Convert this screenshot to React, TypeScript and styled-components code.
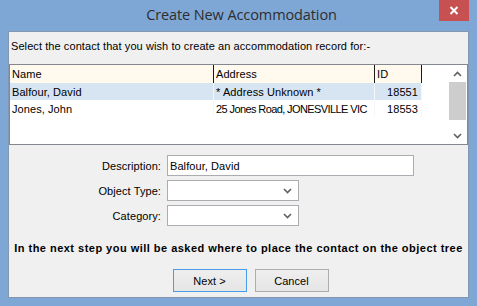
import React from 'react';
import styled, { createGlobalStyle } from 'styled-components';

const GlobalStyle = createGlobalStyle`
  html, body {
    margin: 0;
    padding: 0;
    background: #7fa7d6;
  }
`;

const Window = styled.div`
  width: 477px;
  height: 306px;
  box-sizing: border-box;
  background: #7fa7d6;
  padding: 0 8px 8px 8px;
  display: flex;
  flex-direction: column;
  font-family: 'Liberation Sans', Arial, sans-serif;
  font-size: 11px;
  letter-spacing: 0.08px;
  color: #000;
`;

const TitleBar = styled.div`
  position: relative;
  height: 31px;
  flex: none;
  display: flex;
  align-items: center;
  justify-content: center;
`;

const Title = styled.div`
  font-family: 'Open Sans', 'Noto Sans', sans-serif;
  font-size: 14.5px;
  letter-spacing: -0.1px;
  color: #2e2e2e;
  margin-top: -2px;
  padding-left: 6px;
`;

const CloseButton = styled.div`
  position: absolute;
  top: 0;
  right: 0;
  width: 30px;
  height: 21px;
  background: #c75050;
  display: flex;
  align-items: center;
  justify-content: center;
`;

const Client = styled.div`
  flex: 1;
  background: #f0f0f0;
  border: 1px solid #8497b0;
  display: flex;
  flex-direction: column;
`;

const Prompt = styled.div`
  padding: 8px 0 0 2px;
  height: 32px;
  box-sizing: border-box;
`;

const ListBox = styled.div`
  height: 81px;
  box-sizing: border-box;
  border: 1px solid #828790;
  background: #fff;
  display: flex;
`;

const Table = styled.div`
  flex: 1;
  display: flex;
  flex-direction: column;
`;

const Row = styled.div<{ $header?: boolean; $selected?: boolean }>`
  display: grid;
  grid-template-columns: 204px 161px 47px;
  height: ${p => (p.$header ? 18 : 17)}px;
  width: 412px;
  background: ${p => (p.$header ? '#fff9ee' : p.$selected ? '#d7e4f2' : '#fff')};
`;

const Cell = styled.div<{ $header?: boolean; $right?: boolean; $tight?: boolean }>`
  display: flex;
  align-items: center;
  justify-content: ${p => (p.$right ? 'flex-end' : 'flex-start')};
  padding: ${p => (p.$right ? '0 3px 0 0' : '0 0 0 2px')};
  border-right: 1px solid ${p => (p.$header ? '#1a1a1a' : '#f4f7fb')};
  letter-spacing: ${p => (p.$tight ? '-0.6px' : '0.08px')};
  white-space: nowrap;
  overflow: hidden;
`;

const ScrollBar = styled.div`
  width: 17px;
  margin-right: 1px;
  display: flex;
  flex-direction: column;
  align-items: stretch;
`;

const ScrollArrow = styled.div`
  height: 17px;
  display: flex;
  align-items: center;
  justify-content: center;
`;

const ScrollTrack = styled.div`
  flex: 1;
  display: flex;
  flex-direction: column;
`;

const ScrollThumb = styled.div`
  height: 38px;
  background: #cdcdcd;
`;

const Form = styled.div`
  display: grid;
  grid-template-columns: 152px auto;
  column-gap: 6px;
  row-gap: 4px;
  margin-top: 10px;
  align-items: center;
`;

const Label = styled.div`
  text-align: right;
`;

const TextBox = styled.div`
  width: 247px;
  height: 21px;
  box-sizing: border-box;
  border: 1px solid #abadb3;
  background: #fff;
  display: flex;
  align-items: center;
  padding-left: 2px;
`;

const Combo = styled.div`
  width: 132px;
  height: 21px;
  box-sizing: border-box;
  border: 1px solid #abadb3;
  background: #fff;
  display: flex;
  align-items: center;
  justify-content: flex-end;
  padding-right: 6px;
`;

const Note = styled.div`
  font-weight: bold;
  letter-spacing: 0.48px;
  text-align: center;
  margin-top: 12px;
  height: 20px;
  line-height: 20px;
`;

const ButtonRow = styled.div`
  display: flex;
  justify-content: center;
  gap: 8px;
  margin-top: 11px;
  padding-left: 24px;
`;

const Button = styled.div<{ $default?: boolean }>`
  width: 74px;
  height: 23px;
  box-sizing: border-box;
  border: 1px solid ${p => (p.$default ? '#4a9be8' : '#adadad')};
  background: linear-gradient(#efefef, #e5e5e5);
  display: flex;
  align-items: center;
  justify-content: center;
`;

const Chevron: React.FC<{ up?: boolean; color?: string }> = ({ up, color = '#606060' }) => (
  <svg width="9" height="6" viewBox="0 0 9 6">
    <polyline
      points={up ? '1,5 4.5,1.5 8,5' : '1,1 4.5,4.5 8,1'}
      fill="none"
      stroke={color}
      strokeWidth="1.6"
    />
  </svg>
);

const contacts = [
  { name: 'Balfour, David', address: '* Address Unknown *', id: 18551 },
  { name: 'Jones, John', address: '25 Jones Road, JONESVILLE VIC', id: 18553 },
];

const App: React.FC = () => {
  return (
    <>
      <GlobalStyle />
      <Window>
        <TitleBar>
          <Title>Create New Accommodation</Title>
          <CloseButton>
            <svg width="10" height="9" viewBox="0 0 10 9">
              <path d="M1.5 1 L8.5 8 M8.5 1 L1.5 8" stroke="#fff" strokeWidth="2" />
            </svg>
          </CloseButton>
        </TitleBar>
        <Client>
          <Prompt>Select the contact that you wish to create an accommodation record for:-</Prompt>
          <ListBox>
            <Table>
              <Row $header>
                <Cell $header>Name</Cell>
                <Cell $header>Address</Cell>
                <Cell $header>ID</Cell>
              </Row>
              {contacts.map((c, i) => (
                <Row key={c.id} $selected={i === 0}>
                  <Cell>{c.name}</Cell>
                  <Cell $tight={c.address.length > 24}>{c.address}</Cell>
                  <Cell $right>{c.id}</Cell>
                </Row>
              ))}
            </Table>
            <ScrollBar>
              <ScrollArrow>
                <Chevron up />
              </ScrollArrow>
              <ScrollTrack>
                <ScrollThumb />
              </ScrollTrack>
              <ScrollArrow>
                <Chevron />
              </ScrollArrow>
            </ScrollBar>
          </ListBox>
          <Form>
            <Label>Description:</Label>
            <TextBox>Balfour, David</TextBox>
            <Label>Object Type:</Label>
            <Combo>
              <Chevron />
            </Combo>
            <Label>Category:</Label>
            <Combo>
              <Chevron />
            </Combo>
          </Form>
          <Note>In the next step you will be asked where to place the contact on the object tree</Note>
          <ButtonRow>
            <Button $default>Next &gt;</Button>
            <Button>Cancel</Button>
          </ButtonRow>
        </Client>
      </Window>
    </>
  );
};

export default App;
